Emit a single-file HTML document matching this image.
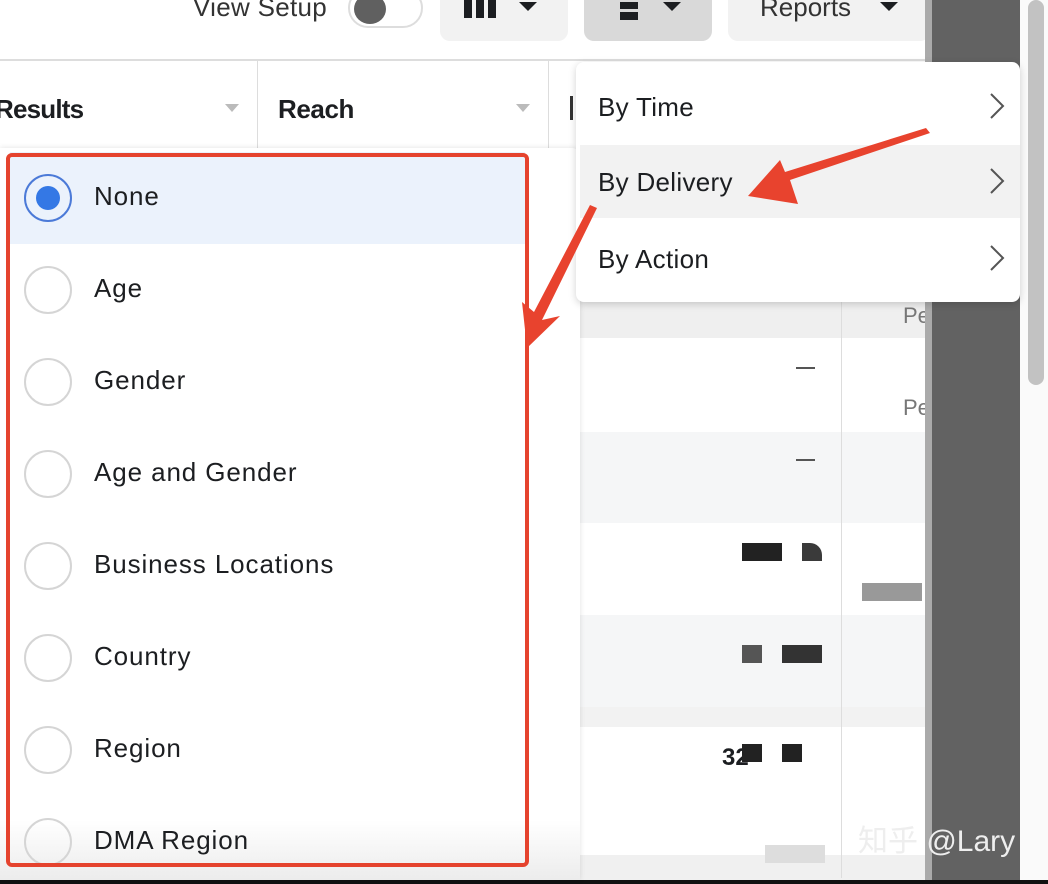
<!DOCTYPE html>
<html><head><style>
*{margin:0;padding:0;box-sizing:border-box}
body{width:1048px;height:884px;overflow:hidden;background:#fff;position:relative;font-family:"Liberation Sans",Arial,sans-serif;color:#1c1e21}
.a{position:absolute}
.btn{position:absolute;top:-10px;height:51px;border-radius:10px;background:#f2f2f2}
.tri{position:absolute;width:0;height:0;border-left:9px solid transparent;border-right:9px solid transparent;border-top:9px solid #1c1e21}
.row{position:absolute;left:10px;width:515px;height:92px}
.radio{position:absolute;left:14px;width:48px;height:48px;border:2px solid #d5d5d5;border-radius:50%;top:22px}
.lbl{position:absolute;left:84px;top:29px;font-size:26px;letter-spacing:0.9px}
.mi{position:absolute;left:580px;width:440px;height:76px}
.mi span{position:absolute;left:18px;top:24px;font-size:26px;letter-spacing:0.3px}
.chev{position:absolute;left:408px;top:24px;width:18px;height:28px}
</style></head><body>
<!-- top bar -->
<div class="a" style="left:193px;top:-8px;font-size:26px;color:#333;letter-spacing:0.3px">View Setup</div>
<div class="a" style="left:348px;top:-12px;width:75px;height:40px;border:2px solid #ddd;border-radius:20px;background:#fff"></div>
<div class="a" style="left:354px;top:-6px;width:32px;height:30px;border-radius:50%;background:#606060"></div>
<div class="btn" style="left:440px;width:128px"></div>
<div class="a" style="left:464px;top:0;width:8px;height:18px;background:#1c1e21"></div>
<div class="a" style="left:476px;top:0;width:8px;height:18px;background:#1c1e21"></div>
<div class="a" style="left:488px;top:0;width:8px;height:18px;background:#1c1e21"></div>
<div class="tri" style="left:519px;top:2px"></div>
<div class="btn" style="left:584px;width:128px;background:#d9d9d9"></div>
<div class="a" style="left:620px;top:2px;width:18px;height:7px;background:#1c1e21"></div>
<div class="a" style="left:620px;top:12px;width:18px;height:8px;background:#1c1e21"></div>
<div class="tri" style="left:663px;top:2px"></div>
<div class="btn" style="left:728px;width:202px"></div>
<div class="a" style="left:760px;top:-8px;font-size:26px;color:#333">Reports</div>
<div class="tri" style="left:880px;top:2px"></div>
<div class="a" style="left:0;top:59px;width:932px;height:2px;background:#ddd"></div>
<!-- header -->
<div class="a" style="left:-5px;top:94px;font-size:26px;font-weight:bold;letter-spacing:-0.8px">Results</div>
<div class="a" style="left:225px;top:104px;border-left:7px solid transparent;border-right:7px solid transparent;border-top:8px solid #bbb"></div>
<div class="a" style="left:257px;top:61px;width:1px;height:90px;background:#ddd"></div>
<div class="a" style="left:278px;top:94px;font-size:26px;font-weight:bold;letter-spacing:-0.4px">Reach</div>
<div class="a" style="left:516px;top:104px;border-left:7px solid transparent;border-right:7px solid transparent;border-top:8px solid #bbb"></div>
<div class="a" style="left:548px;top:61px;width:1px;height:90px;background:#ddd"></div>
<div class="a" style="left:570px;top:96px;width:3px;height:24px;background:#333"></div>
<!-- table bg right -->
<div class="a" style="left:580px;top:300px;width:345px;height:38px;background:#efefef"></div>
<div class="a" style="left:580px;top:432px;width:345px;height:91px;background:#f5f6f7"></div>
<div class="a" style="left:580px;top:615px;width:345px;height:92px;background:#f5f6f7"></div>
<div class="a" style="left:580px;top:707px;width:345px;height:20px;background:#f2f2f2"></div>
<div class="a" style="left:580px;top:855px;width:345px;height:25px;background:#f0f0f0"></div>
<div class="a" style="left:841px;top:62px;width:1px;height:816px;background:#ddd"></div>
<div class="a" style="left:796px;top:367px;width:19px;height:2px;background:#555"></div>
<div class="a" style="left:796px;top:459px;width:19px;height:2px;background:#555"></div>
<div class="a" style="left:903px;top:303px;font-size:22px;color:#777">Pe</div>
<div class="a" style="left:903px;top:395px;font-size:22px;color:#777">Pe</div>
<div class="a" style="left:742px;top:543px;width:40px;height:18px;background:#222"></div>
<div class="a" style="left:802px;top:543px;width:20px;height:18px;background:#3a3a3a;border-top-right-radius:12px"></div>
<div class="a" style="left:862px;top:583px;width:60px;height:18px;background:#999"></div>
<div class="a" style="left:742px;top:645px;width:20px;height:18px;background:#555"></div>
<div class="a" style="left:782px;top:645px;width:40px;height:18px;background:#333"></div>
<div class="a" style="left:722px;top:744px;font-size:24px;font-weight:bold">32</div>
<div class="a" style="left:742px;top:744px;width:20px;height:18px;background:#222"></div>
<div class="a" style="left:782px;top:744px;width:20px;height:18px;background:#222"></div>
<div class="a" style="left:765px;top:845px;width:60px;height:18px;background:#ddd"></div>
<!-- dark panel and scrollbar -->
<div class="a" style="left:925px;top:0;width:8px;height:880px;background:#aaa"></div>
<div class="a" style="left:932px;top:0;width:88px;height:880px;background:#626262"></div>
<div class="a" style="left:1020px;top:0;width:28px;height:880px;background:#fafafa"></div>
<div class="a" style="left:1028px;top:0;width:16px;height:385px;border-radius:8px;background:#c2c2c2"></div>
<div class="a" style="left:858px;top:816px;font-size:30px;color:#eee;font-family:'Liberation Sans','Noto Sans CJK SC',sans-serif">知乎 @Lary</div>
<div class="a" style="left:0;top:880px;width:1048px;height:4px;background:#111"></div>
<!-- left dropdown -->
<div class="a" style="left:0;top:148px;width:580px;height:732px;background:#fff;border-radius:0 8px 0 0;box-shadow:0 0 6px rgba(0,0,0,.12)"></div>
<div class="a" style="left:0;top:820px;width:580px;height:60px;background:linear-gradient(#fff,#ececec)"></div>
<div class="row" style="top:152px;background:#ebf2fc"></div>
<div class="row" style="top:152px"><div class="radio" style="border-color:#4b7ad8"></div><div class="a" style="left:26px;top:34px;width:24px;height:24px;border-radius:50%;background:#3478e5"></div><div class="lbl">None</div></div>
<div class="row" style="top:244px"><div class="radio"></div><div class="lbl">Age</div></div>
<div class="row" style="top:336px"><div class="radio"></div><div class="lbl">Gender</div></div>
<div class="row" style="top:428px"><div class="radio"></div><div class="lbl">Age and Gender</div></div>
<div class="row" style="top:520px"><div class="radio"></div><div class="lbl">Business Locations</div></div>
<div class="row" style="top:612px"><div class="radio"></div><div class="lbl">Country</div></div>
<div class="row" style="top:704px"><div class="radio"></div><div class="lbl">Region</div></div>
<div class="row" style="top:796px;height:70px;overflow:hidden"><div class="radio"></div><div class="lbl">DMA Region</div></div>
<div class="a" style="left:6px;top:153px;width:523px;height:714px;border:4px solid #e5432e;border-radius:6px"></div>
<!-- right menu -->
<div class="a" style="left:576px;top:62px;width:444px;height:240px;background:#fff;border-radius:8px;box-shadow:0 2px 8px rgba(0,0,0,.18)"></div>
<div class="mi" style="top:68px"><span>By Time</span><svg class="chev" viewBox="0 0 18 28"><path d="M3 2 L15 14 L3 26" fill="none" stroke="#555" stroke-width="2"/></svg></div>
<div class="mi" style="top:145px;height:73px;background:#f2f2f2"><span style="top:22px">By Delivery</span><svg class="chev" viewBox="0 0 18 28" style="top:22px"><path d="M3 2 L15 14 L3 26" fill="none" stroke="#555" stroke-width="2"/></svg></div>
<div class="mi" style="top:220px"><span>By Action</span><svg class="chev" viewBox="0 0 18 28"><path d="M3 2 L15 14 L3 26" fill="none" stroke="#555" stroke-width="2"/></svg></div>
<!-- arrows -->
<svg class="a" style="left:0;top:0" width="1048" height="884">
<path d="M930 133 L790 180 L798 204 L748 196 L780 160 L785 172 L926 128 Z" fill="#e8432e"/>
<path d="M597 208 L542 320 L560 316 L527 348 L522 302 L534 312 L590 205 Z" fill="#e8432e"/>
</svg>
</body></html>
